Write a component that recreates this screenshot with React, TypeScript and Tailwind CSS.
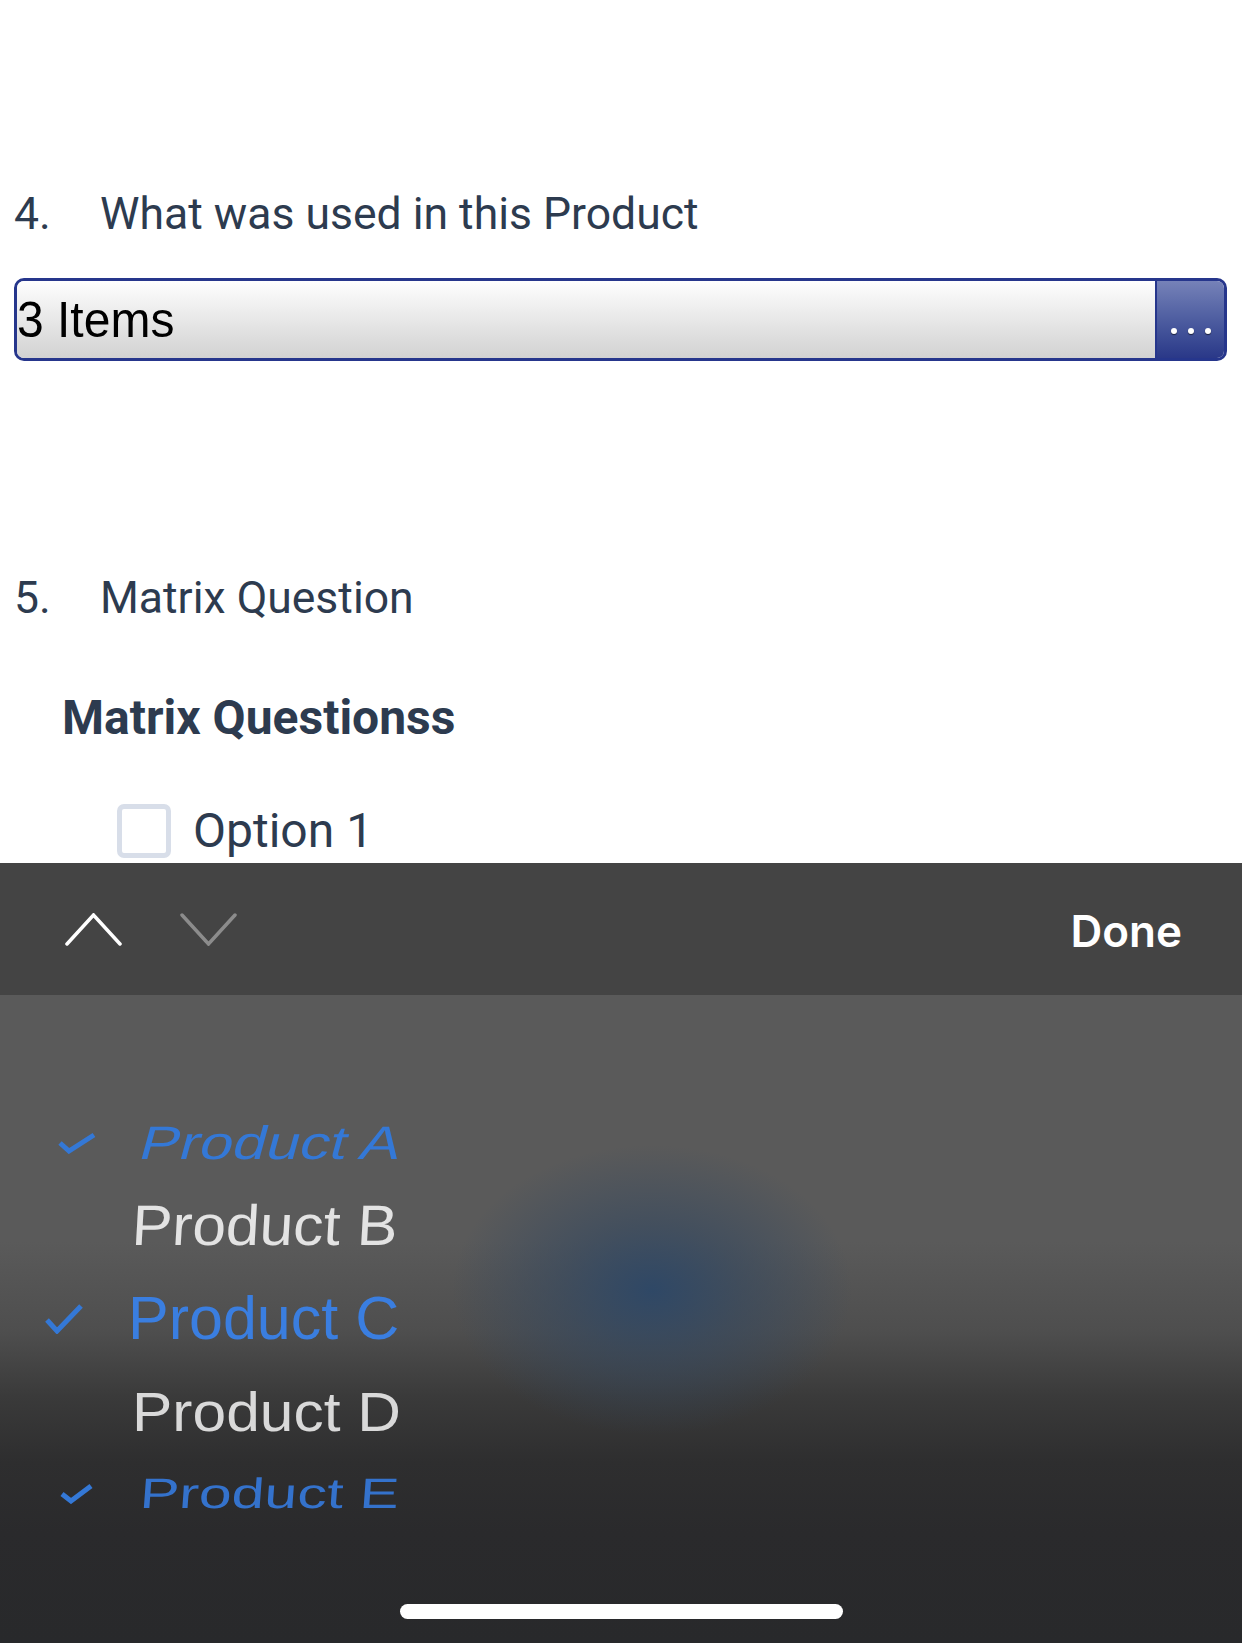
import React from "react";

type Row = {
  label: string;
  checked: boolean;
  row: string;
  text: string;
  check?: { w: number; h: number; pts: string };
};

const rows: Row[] = [
  {
    label: "Product A",
    checked: true,
    row: "h-[80px] pl-[57px]",
    text: "ml-[44px] text-[60px] text-[#3478d6] scale-y-[0.78] -skew-x-12",
    check: { w: 40, h: 22, pts: "3,11 12,19 37,3" },
  },
  {
    label: "Product B",
    checked: false,
    row: "h-[84px] pl-[132px]",
    text: "text-[60.5px] text-[#e3e3e3] scale-y-[0.94] -skew-x-3",
  },
  {
    label: "Product C",
    checked: true,
    row: "h-[102px] pl-[44px]",
    text: "ml-[44px] text-[61px] text-[#3a7ee0]",
    check: { w: 40, h: 31, pts: "3,17 13,28 37,3" },
  },
  {
    label: "Product D",
    checked: false,
    row: "h-[86px] pl-[132px]",
    text: "text-[60.5px] text-[#d9d9d9] scale-y-[0.91]",
  },
  {
    label: "Product E",
    checked: true,
    row: "h-[76px] pl-[59px]",
    text: "ml-[46px] text-[59px] text-[#3472cc] scale-y-[0.72] -skew-x-3",
    check: { w: 35, h: 21, pts: "3,11 12,18 32,3" },
  },
];

function Chevron({ up, color }: { up: boolean; color: string }) {
  return (
    <svg width="57" height="33" viewBox="0 0 57 33" fill="none">
      <polyline
        points={up ? "2,31 28.5,2 55,31" : "2,2 28.5,31 55,2"}
        stroke={color}
        strokeWidth="3.5"
        strokeLinecap="round"
        strokeLinejoin="miter"
      />
    </svg>
  );
}

function PickerRow({ r }: { r: Row }) {
  return (
    <div className={`flex items-center ${r.row}`}>
      {r.check && (
        <svg width={r.check.w} height={r.check.h} viewBox={`0 0 ${r.check.w} ${r.check.h}`} fill="none">
          <polyline points={r.check.pts} stroke="#3478d6" strokeWidth="5" strokeLinejoin="miter" />
        </svg>
      )}
      <span className={`inline-block leading-none font-['Liberation_Sans',Arial,sans-serif] ${r.text}`}>{r.label}</span>
    </div>
  );
}

export default function App() {
  return (
    <div className="w-full h-[1643px] flex flex-col bg-white overflow-hidden font-['Roboto',sans-serif]">
      <section className="h-[863px] shrink-0 pt-[188px] overflow-hidden text-[#2d3b4f]">
        <div className="flex pl-[14px] text-[44.5px] leading-[52px]">
          <span className="w-[86px]">4.</span>
          <span>What was used in this Product</span>
        </div>

        <div className="mt-[38px] ml-[14px] mr-[15px] h-[83px] flex rounded-[10px] border-[3px] border-[#26368c] overflow-hidden">
          <div className="flex-1 flex items-center bg-linear-to-b from-[#fefefe] to-[#d2d2d2] font-['Liberation_Sans',Arial,sans-serif] text-[48px] leading-none text-black">
            <span className="inline-block scale-y-[1.04] origin-left">3 Items</span>
          </div>
          <div className="w-[69px] border-l-[2px] border-[#26368c] bg-linear-to-b from-[#7682b8] to-[#2a3888] flex items-center justify-center gap-[11px] pt-[22px]">
            <span className="w-[6px] h-[6px] rounded-full bg-white shadow-[0_1px_1px_rgba(0,0,0,0.6)]" />
            <span className="w-[6px] h-[6px] rounded-full bg-white shadow-[0_1px_1px_rgba(0,0,0,0.6)]" />
            <span className="w-[6px] h-[6px] rounded-full bg-white shadow-[0_1px_1px_rgba(0,0,0,0.6)]" />
          </div>
        </div>

        <div className="mt-[211px] flex pl-[14px] text-[44.5px] leading-[52px]">
          <span className="w-[86px]">5.</span>
          <span>Matrix Question</span>
        </div>

        <div className="mt-[66px] pl-[62px] text-[48px] leading-[56px] font-bold">Matrix Questionss</div>

        <div className="mt-[58px] pl-[117px] flex items-center">
          <span className="w-[54px] h-[54px] rounded-[7px] border-[5px] border-[#d8dee9] bg-white" />
          <span className="ml-[22px] text-[48px] leading-[54px]">Option 1</span>
        </div>
      </section>

      <div className="h-[132px] shrink-0 bg-[#444444] flex items-center pl-[65px] pr-[60px]">
        <Chevron up color="#ffffff" />
        <div className="ml-[58px]">
          <Chevron up={false} color="#8c8c8c" />
        </div>
        <span className="ml-auto font-['Inter',sans-serif] font-semibold text-[44px] leading-none text-white translate-y-[2px]">Done</span>
      </div>

      <div className="h-[648px] shrink-0 flex flex-col pt-[108px] bg-[image:radial-gradient(ellipse_200px_145px_at_652px_295px,rgba(47,72,102,1)_0%,rgba(52,72,96,0.6)_45%,transparent_100%),linear-gradient(to_bottom,#5a5a5a_0%,#5a5a5a_38%,#4e4e4e_52%,#3a3a3a_62%,#2e2e2f_72%,#2a2a2c_83%,#28292b_100%)]">
        {rows.map((r) => (
          <PickerRow key={r.label} r={r} />
        ))}
        <div className="mt-[73px] mx-auto w-[443px] h-[15px] rounded-full bg-white" />
      </div>
    </div>
  );
}
